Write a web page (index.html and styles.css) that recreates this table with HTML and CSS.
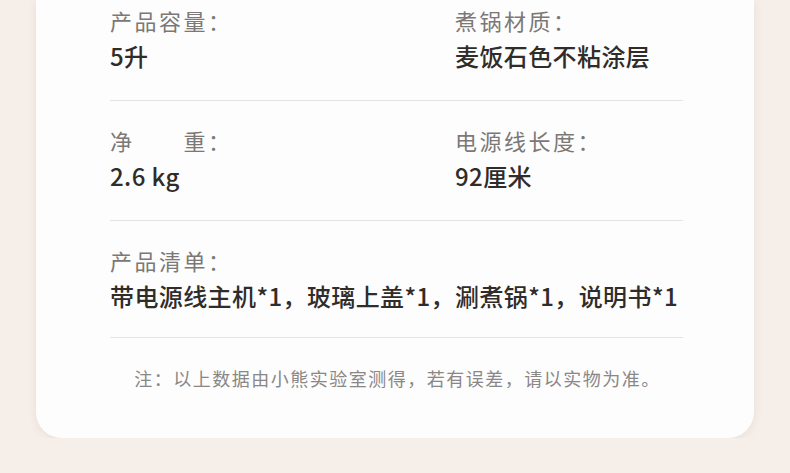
FILE: index.html
```html
<!DOCTYPE html>
<html lang="zh-CN">
<head>
    <meta charset="UTF-8">
    <meta name="viewport" content="width=device-width, initial-scale=1.0">
    <title>产品参数</title>
    <link rel="stylesheet" href="styles.css">
</head>
<body>

    <div class="card">
        <div class="spec-row">
            <div class="spec">
                <div class="label">产品容量：</div>
                <div class="value">5升</div>
            </div>
            <div class="spec">
                <div class="label">煮锅材质：</div>
                <div class="value">麦饭石色不粘涂层</div>
            </div>
        </div>

        <div class="spec-row">
            <div class="spec">
                <div class="label">净&emsp;&emsp;重：</div>
                <div class="value">2.6 kg</div>
            </div>
            <div class="spec">
                <div class="label">电源线长度：</div>
                <div class="value">92厘米</div>
            </div>
        </div>

        <div class="spec-row single">
            <div class="spec">
                <div class="label">产品清单：</div>
                <div class="value">带电源线主机*1，玻璃上盖*1，涮煮锅*1，说明书*1</div>
            </div>
        </div>

        <p class="note">注：以上数据由小熊实验室测得，若有误差，请以实物为准。</p>
    </div>

</body>
</html>
```

FILE: styles.css
```css
body {
    background-color: #f6eee9;
    font-family: "Noto Sans CJK SC", "Noto Sans", sans-serif;
    margin: 0;
    padding: 0 36px;
}

.card {
    background-color: #fdfdfd;
    border-radius: 0 0 26px 26px;
    box-shadow: 0 2px 8px rgba(150, 120, 100, 0.12);
    padding: 0 71px 45px 74px;
}

.spec-row {
    display: grid;
    grid-template-columns: 345px 1fr;
    padding: 24px 0 27px;
    border-bottom: 1px solid #e6e4e2;
}

.spec-row:first-child {
    padding-top: 5px;
}

.spec-row.single {
    grid-template-columns: 1fr;
    padding-bottom: 24px;
}

.label {
    font-size: 22px;
    line-height: 30px;
    letter-spacing: 2.5px;
    color: #7b7876;
}

.value {
    margin-top: 4px;
    font-size: 24px;
    line-height: 34px;
    font-weight: 500;
    letter-spacing: 0.4px;
    color: #2f2c2a;
    white-space: nowrap;
}

.note {
    margin: 25px 0 0;
    font-size: 18px;
    line-height: 30px;
    letter-spacing: 1.5px;
    color: #8a8786;
    text-align: center;
    padding-left: 2px;
}
```
